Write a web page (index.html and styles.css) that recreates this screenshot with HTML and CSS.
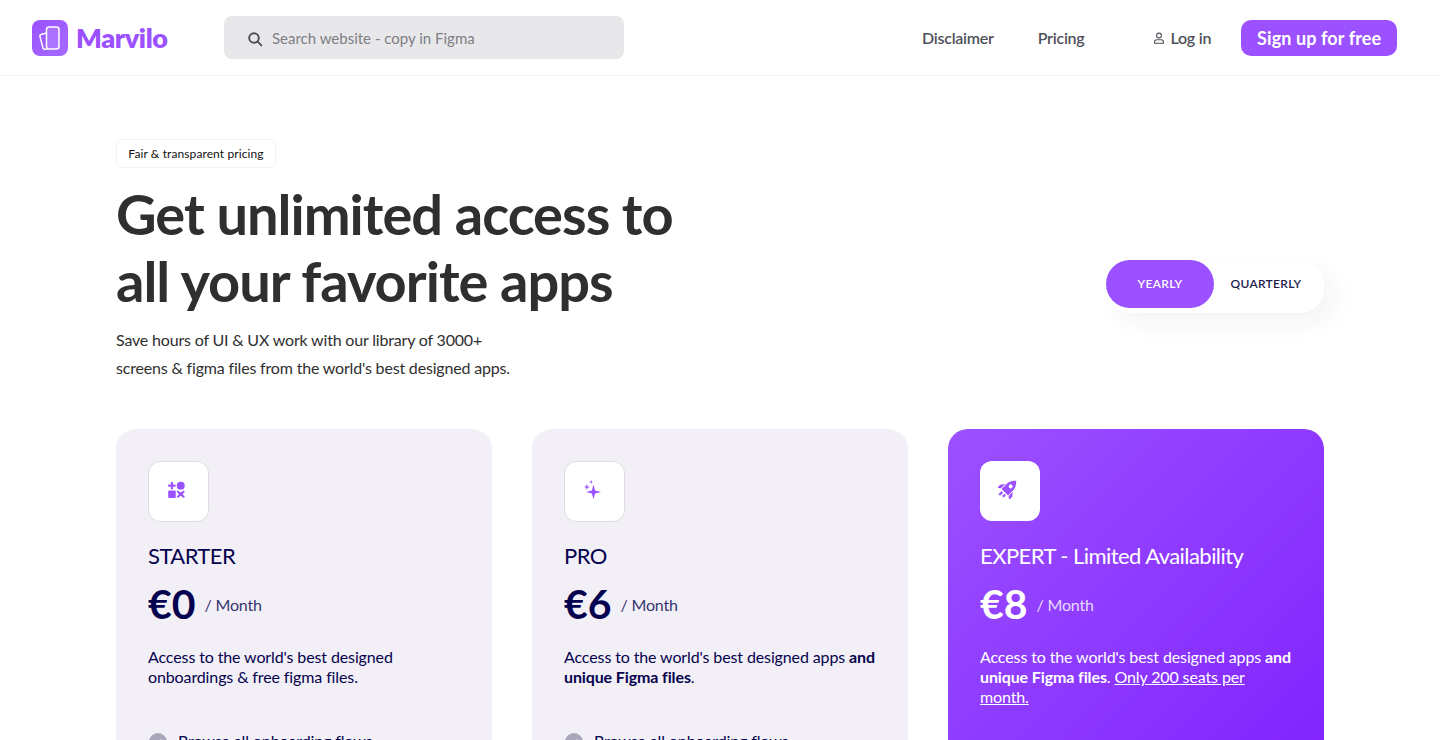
FILE: index.html
```html
<!DOCTYPE html>
<html lang="en">
<head>
  <meta charset="UTF-8">
  <meta name="viewport" content="width=device-width, initial-scale=1.0">
  <title>Marvilo - Pricing</title>
  <link rel="stylesheet" href="styles.css">
</head>
<body>
  <div class="page">

    <header class="topbar">
      <a class="logo" href="#">
        <span class="logo-mark">
          <svg width="36" height="36" viewBox="0 0 36 36" fill="none" stroke="#fff" stroke-width="1.5" stroke-linejoin="round">
            <rect x="14.500" y="7" width="12.500" height="22" rx="2.500" fill="#fff" fill-opacity="0.12"/>
            <path d="M14.500 13l-5.300 1.400a1.800 1.800 0 0 0-1.200 2.200l3 11.400a1.800 1.800 0 0 0 2.200 1.300l2.800-.8"/>
          </svg>
        </span>
        <span class="logo-name">Marvilo</span>
      </a>

      <div class="search">
        <svg width="16" height="16" viewBox="0 0 16 16" fill="none" stroke="#50505a" stroke-width="2" stroke-linecap="round">
          <circle cx="7" cy="7" r="4.800"/>
          <path d="M10.600 10.600l3.800 3.800"/>
        </svg>
        <span>Search website - copy in Figma</span>
      </div>

      <nav class="nav">
        <a class="nav-link" href="#">Disclaimer</a>
        <a class="nav-link" href="#">Pricing</a>
      </nav>

      <a class="login" href="#">
        <svg width="12" height="12" viewBox="0 0 12 12" fill="none" stroke="#50505a" stroke-width="1.100">
          <circle cx="6" cy="3.500" r="2.400"/>
          <path d="M1.600 11.200h8.800V10c0-1.300-1-2.200-2.200-2.200H3.800c-1.200 0-2.200.9-2.200 2.200z"/>
        </svg>
        Log in
      </a>
      <a class="signup" href="#">Sign up for free</a>
    </header>

    <main class="content">
      <section class="hero">
        <div class="hero-text">
          <span class="tag">Fair &amp; transparent pricing</span>
          <h1>Get unlimited access to<br>all your favorite apps</h1>
          <p class="lead">Save hours of UI &amp; UX work with our library of 3000+<br>screens &amp; figma files from the world's best designed apps.</p>
        </div>
        <div class="toggle">
          <span class="toggle-btn active">Yearly</span>
          <span class="toggle-btn">Quarterly</span>
        </div>
      </section>

      <section class="plans">
        <article class="plan">
          <div class="plan-icon">
            <svg width="17" height="17" viewBox="0 0 18 18" fill="#9b51ff">
              <path d="M3 1h2.200v2.800H8V6H5.200v2.800H3V6H.2V3.800H3z"/>
              <circle cx="13.500" cy="4.900" r="4.200"/>
              <rect x=".2" y="10" width="8" height="8" rx="1"/>
              <path d="M10.400 10l3.100 2.300 3.100-2.300 1.200 1.200-2.300 2.800 2.300 2.800-1.200 1.200-3.100-2.300-3.100 2.300-1.200-1.200 2.300-2.800-2.300-2.800z"/>
            </svg>
          </div>
          <h2>STARTER</h2>
          <div class="price"><strong>€0</strong><span>/ Month</span></div>
          <p class="desc">Access to the world's best designed onboardings &amp; free figma files.</p>
          <ul class="features">
            <li>
              <span class="check"><svg width="10" height="10" viewBox="0 0 10 10" fill="none" stroke="#f2f0f6" stroke-width="1.500"><path d="M1.500 5.200l2.400 2.400 4.600-5"/></svg></span>
              Browse all onboarding flows
            </li>
          </ul>
        </article>

        <article class="plan">
          <div class="plan-icon">
            <svg width="17" height="19" viewBox="0 0 17 19" fill="#9b51ff">
              <path d="M9.500 4.500l1.600 6 5.900 1.500-5.900 1.500-1.600 5.500-1.600-5.500L2 12l5.900-1.500z"/>
              <path d="M2.800 3.800l.7 2.500 2.400.7-2.400.7-.7 2.500-.7-2.500L0 7l2.100-.7z"/>
              <path d="M7.200 0l.5 1.600 1.500.5-1.500.5-.5 1.600-.5-1.600-1.500-.5 1.500-.5z"/>
            </svg>
          </div>
          <h2>PRO</h2>
          <div class="price"><strong>€6</strong><span>/ Month</span></div>
          <p class="desc">Access to the world's best designed apps <b>and unique Figma files</b>.</p>
          <ul class="features">
            <li>
              <span class="check"><svg width="10" height="10" viewBox="0 0 10 10" fill="none" stroke="#f2f0f6" stroke-width="1.500"><path d="M1.500 5.200l2.400 2.400 4.600-5"/></svg></span>
              Browse all onboarding flows
            </li>
          </ul>
        </article>

        <article class="plan plan-expert">
          <div class="plan-icon">
            <svg width="20" height="20" viewBox="0 0 20 20" fill="#9b51ff">
              <g transform="rotate(45 10 10)">
                <path fill-rule="evenodd" d="M10-1.500c3.200 2.400 4.600 6 4.600 9.500v6.500H5.400V8c0-3.500 1.400-7.100 4.600-9.500zM10 4.300a2 2 0 1 0 0 4 2 2 0 0 0 0-4z"/>
                <path d="M4.600 8.500v6L1.500 17v-4.500zM15.400 8.500v6l3.100 2.500v-4.500z"/>
                <rect x="7" y="16" width="2.200" height="4.500"/>
                <rect x="10.800" y="16" width="2.200" height="3"/>
              </g>
            </svg>
          </div>
          <h2>EXPERT - Limited Availability</h2>
          <div class="price"><strong>€8</strong><span>/ Month</span></div>
          <p class="desc">Access to the world's best designed apps <b>and unique Figma files</b>. <u>Only 200 seats per month.</u></p>
        </article>
      </section>
    </main>

  </div>
</body>
</html>
```

FILE: styles.css
```css
* {
  box-sizing: border-box;
}

body {
  margin: 0;
  background: #fff;
  font-family: 'Lato', sans-serif;
  color: #2f2f2f;
}

a {
  text-decoration: none;
  color: inherit;
}

.page {
  height: 740px;
  overflow: hidden;
}

/* Top bar */
.topbar {
  display: flex;
  align-items: center;
  height: 76px;
  padding: 0 43px 0 32px;
  border-bottom: 1px solid #f1f1f5;
}

.logo {
  display: flex;
  flex-shrink: 0;
  align-items: center;
  gap: 8px;
  width: 192px;
}

.logo-mark {
  display: block;
  width: 36px;
  height: 36px;
  border-radius: 8px;
  background: linear-gradient(135deg, #9b51ff, #a56bff);
}

.logo-mark svg {
  display: block;
}

.logo-name {
  font-size: 27px;
  font-weight: 800;
  letter-spacing: -0.4px;
  color: #9b51ff;
}

.search {
  display: flex;
  flex-shrink: 0;
  align-items: center;
  gap: 9px;
  width: 400px;
  height: 43px;
  padding-left: 23px;
  border-radius: 8px;
  background: #e8e8ea;
  font-size: 15px;
  color: #7e7e84;
}

.search svg {
  margin-top: 2px;
}

.nav {
  display: flex;
  flex-shrink: 0;
  gap: 44px;
  margin-left: 298px;
}

.nav-link,
.login {
  font-size: 16px;
  font-weight: 600;
  letter-spacing: -0.25px;
  color: #50505a;
  white-space: nowrap;
}

.login {
  display: flex;
  flex-shrink: 0;
  align-items: center;
  gap: 5px;
  margin-left: 69px;
}

.signup {
  display: flex;
  flex-shrink: 0;
  align-items: center;
  justify-content: center;
  width: 156px;
  height: 36px;
  margin-left: 30px;
  border-radius: 10px;
  background: #9b51ff;
  color: #fff;
  font-size: 18px;
  font-weight: 700;
  letter-spacing: 0.1px;
  white-space: nowrap;
}

/* Hero */
.content {
  padding: 63px 116px 0;
}

.hero {
  display: flex;
  justify-content: space-between;
  align-items: flex-start;
}

.tag {
  display: block;
  width: 160px;
  height: 29px;
  border: 1px solid #f3f2fb;
  border-radius: 6px;
  background: #fff;
  font-size: 12px;
  letter-spacing: 0.1px;
  line-height: 27px;
  text-align: center;
  color: #111;
}

h1 {
  margin: 12px 0 12px;
  font-size: 56px;
  font-weight: 700;
  line-height: 67px;
  letter-spacing: -1px;
  color: #2f2f2f;
}

.lead {
  margin: 0;
  font-size: 16px;
  line-height: 28px;
  letter-spacing: -0.18px;
  color: #2f2f2f;
}

.toggle {
  display: flex;
  flex-shrink: 0;
  width: 218px;
  height: 53px;
  margin-top: 121px;
  border-radius: 24px;
  background: #fff;
  box-shadow: 10px 10px 25px rgba(40, 40, 100, 0.05);
}

.toggle-btn {
  display: flex;
  align-items: center;
  justify-content: center;
  width: 108px;
  height: 48px;
  padding-bottom: 1px;
  margin-left: -2px;
  border-radius: 24px;
  font-size: 12px;
  font-weight: 600;
  letter-spacing: 0.3px;
  text-transform: uppercase;
  color: #22204a;
}

.toggle-btn.active {
  margin-left: 0;
  background: #9b51ff;
  color: #fff;
}

/* Plans */
.plans {
  display: grid;
  grid-template-columns: repeat(3, 376px);
  gap: 40px;
  margin-top: 47px;
}

.plan {
  height: 400px;
  padding: 32px;
  border-radius: 20px;
  background: #f2f0f6;
  color: #05024f;
}

.plan-expert {
  background: linear-gradient(135deg, #9b51ff, #7f1fff);
  color: #fff;
}

.plan-icon {
  display: flex;
  align-items: center;
  justify-content: center;
  width: 61px;
  height: 61px;
  padding: 0 4px 4px 0;
  border: 1px solid #dedce2;
  border-radius: 12px;
  background: #fff;
}

.plan-expert .plan-icon {
  width: 60px;
  height: 60px;
  border: 0;
}

h2 {
  margin: 19px 0 0;
  font-size: 22px;
  font-weight: 400;
  line-height: 30px;
  letter-spacing: -0.55px;
}

.plan-expert h2 {
  margin-top: 20px;
}

.price {
  display: flex;
  align-items: center;
  gap: 9px;
  margin-top: 6px;
}

.price strong {
  font-size: 41px;
  font-weight: 700;
  line-height: 54px;
}

.price span {
  font-size: 16px;
  letter-spacing: -0.2px;
  opacity: 0.8;
}

.desc {
  margin: 16px 0 0;
  font-size: 16px;
  line-height: 20px;
  letter-spacing: -0.12px;
}

.features {
  margin: 42px 0 0;
  padding: 0;
  list-style: none;
}

.features li {
  display: flex;
  align-items: center;
  gap: 11px;
  height: 22px;
  font-size: 16px;
  letter-spacing: -0.12px;
}

.check {
  display: flex;
  align-items: center;
  justify-content: center;
  width: 18px;
  height: 18px;
  margin: 4px 0 0 1px;
  border-radius: 50%;
  background: #a9a6bc;
}
```
